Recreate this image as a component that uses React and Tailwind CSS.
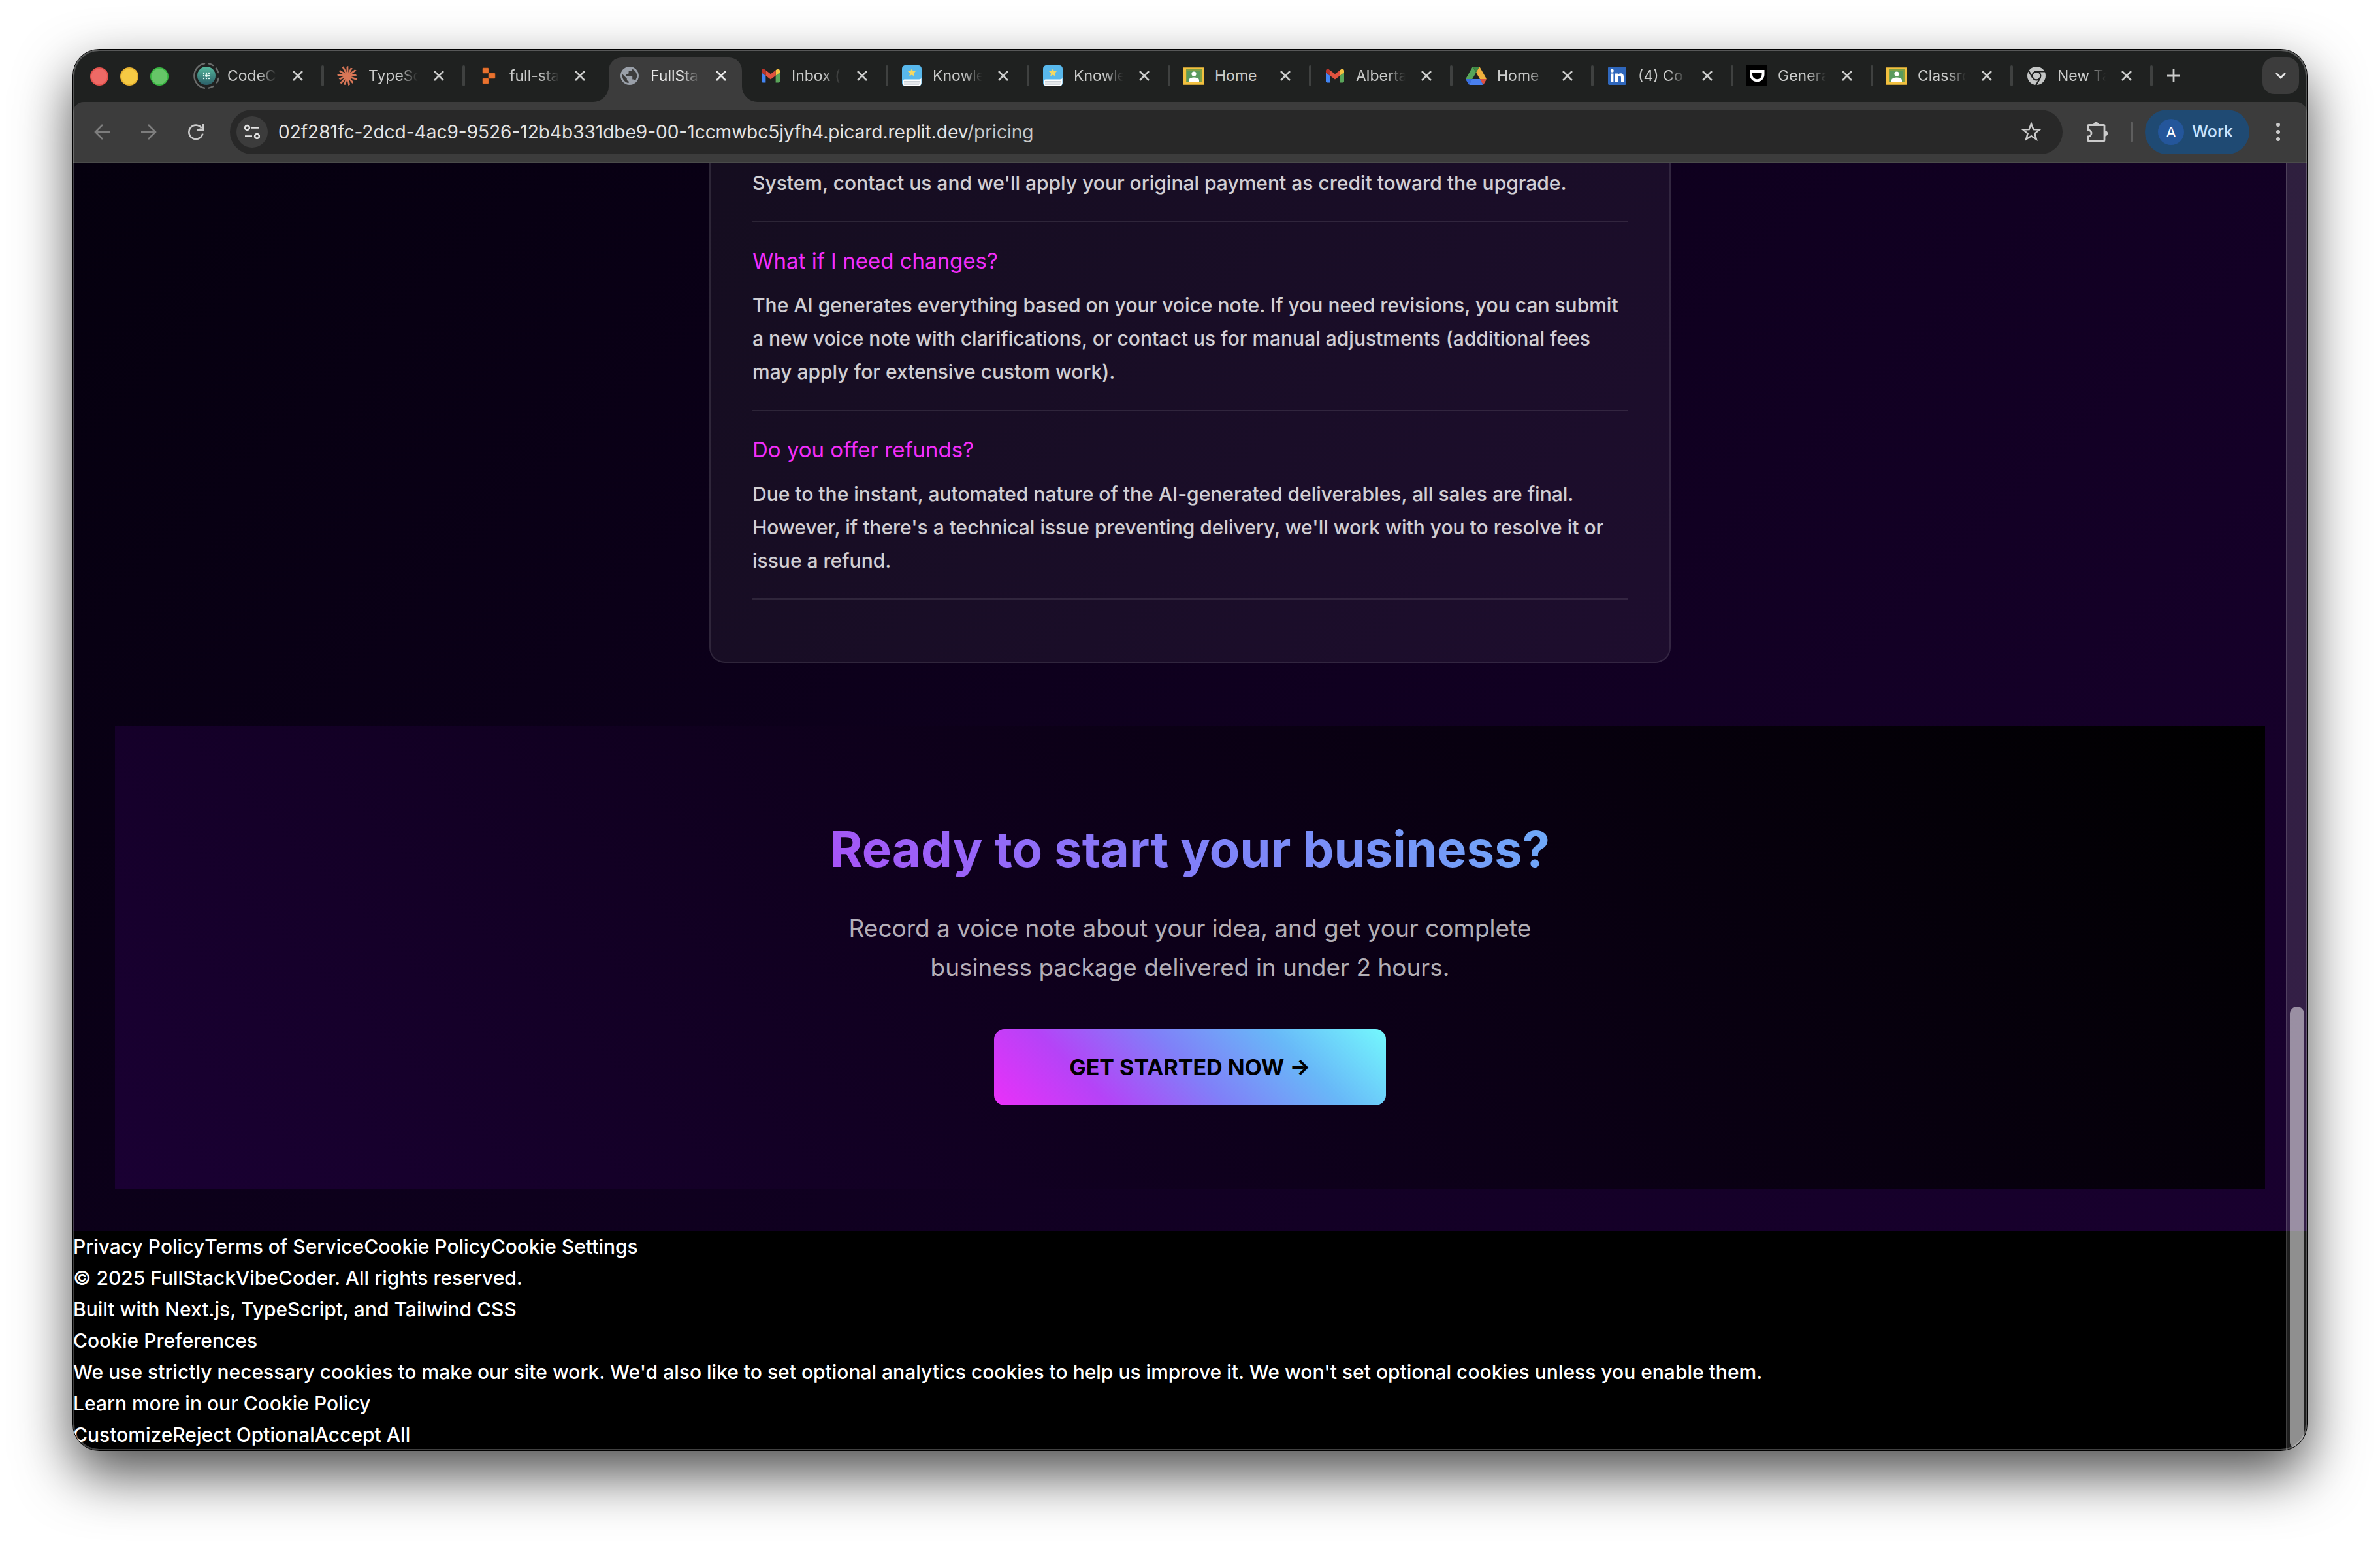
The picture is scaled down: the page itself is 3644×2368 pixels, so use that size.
import React from "react";

/* ---------- favicons ---------- */

function CodeIcon() {
  const dots = [-4, 0, 4];
  return (
    <svg viewBox="-20 -20 40 40" className="size-10 -m-1 shrink-0" aria-hidden="true">
      <defs>
        <linearGradient id="teal" x1="0" y1="0" x2="0" y2="1">
          <stop offset="0" stopColor="#55b79c" />
          <stop offset="1" stopColor="#2b5f68" />
        </linearGradient>
      </defs>
      <g fill="none" stroke="#6b6d6c" strokeWidth="2.4" strokeLinecap="round">
        <path d="M-3 -18.700A19 19 0 0 0 -3 18.700" />
        <path d="M3.500 -18.600A19 19 0 0 1 10 -16M15 -11.500A19 19 0 0 1 18.200 -5M18.600 4A19 19 0 0 1 16 10.500M10.500 16A19 19 0 0 1 3.500 18.600" />
      </g>
      <circle r="14" fill="url(#teal)" />
      {dots.map((y) => dots.map((x) => <circle key={x + "," + y} cx={x} cy={y} r={x === 0 && y === 0 ? 2 : 1.2} fill="#e6fbf4" />))}
    </svg>
  );
}

function BurstIcon() {
  const rays = [[0, 15], [28, 14], [55, 16], [84, 14], [112, 16], [143, 14], [170, 15], [198, 15], [222, 16], [248, 14], [275, 16], [303, 15], [333, 16]];
  return (
    <svg viewBox="-16 -16 32 32" className="size-8 shrink-0" aria-hidden="true">
      {rays.map(([a, l]) => (
        <path key={a} d={`M-1.2 0L-1.5 ${-l + 1}L1.3 ${-l}L1.5 0Z`} transform={`rotate(${a})`} fill="#d97757" />
      ))}
      <circle r="4" fill="#d97757" />
    </svg>
  );
}

function BlocksIcon() {
  return (
    <svg viewBox="0 0 32 32" className="size-8 shrink-0" aria-hidden="true">
      <g fill="#e9722f" stroke="#c85a1c" strokeWidth="0.6">
        <rect x="7" y="4" width="9" height="8" rx="1" />
        <rect x="16" y="12" width="10" height="8" rx="1" />
        <rect x="7" y="20" width="9" height="8" rx="1" />
      </g>
    </svg>
  );
}

function GlobeIcon() {
  return (
    <svg viewBox="2 2 20 20" className="size-7 m-0.5 shrink-0" aria-hidden="true">
      <path fill="#9aa0a9" d="M12 2C6.48 2 2 6.48 2 12s4.48 10 10 10 10-4.48 10-10S17.52 2 12 2zm-1 17.93c-3.95-.49-7-3.85-7-7.93 0-.62.08-1.21.21-1.79L9 15v1c0 1.1.9 2 2 2v1.93zm6.9-2.54c-.26-.81-1-1.39-1.9-1.39h-1v-3c0-.55-.45-1-1-1H8v-2h2c.55 0 1-.45 1-1V7h2c1.1 0 2-.9 2-2v-.41c2.93 1.19 5 4.06 5 7.41 0 2.08-.8 3.97-2.1 5.39z" />
    </svg>
  );
}

function MailIcon() {
  return (
    <svg viewBox="52 42 88 66" className="h-6 w-7 m-0.5 shrink-0" aria-hidden="true">
      <path fill="#4285f4" d="M58 108h14V74L52 59v43c0 3.320 2.690 6 6 6" />
      <path fill="#5aa65a" d="M120 108h14c3.320 0 6-2.690 6-6V59l-20 15" />
      <path fill="#f5c242" d="M120 48v26l20-15v-8c0-7.420-8.470-11.650-14.400-7.200" />
      <path fill="#e0523f" d="M72 74V48l24 18 24-18v26L96 92" />
      <path fill="#b8342b" d="M52 51v8l20 15V48l-5.600-4.200c-5.940-4.450-14.400-.22-14.400 7.200" />
    </svg>
  );
}

function BookIcon() {
  return (
    <svg viewBox="0 0 32 32" className="size-8 shrink-0" aria-hidden="true">
      <rect x="1" y="0" width="30" height="32" rx="5" fill="#58b8ec" />
      <path d="M5 21.500H27Q30.500 21.500 30.500 18V27Q30.500 31.300 26 31.300H6Q2 31.300 2 27.500V25Q2 21.500 5 21.500Z" fill="#fff" />
      <path d="M4 24.500H28M4 27H28M4 29.300H27" stroke="#c5ccd2" strokeWidth="0.900" />
      <path d="M16 5l1.800 3.800 4.200.5-3.100 2.900.8 4.200L16 14.400l-3.700 2 .8-4.200L10 9.300l4.200-.5z" fill="#f5d862" />
    </svg>
  );
}

function ClassroomIcon() {
  return (
    <svg viewBox="0 0 32 28" className="h-7 w-8 shrink-0" aria-hidden="true">
      <rect width="32" height="28" rx="1" fill="#f2c03f" />
      <path d="M0 1Q0 0 1 0H31Q32 0 32 1V2H0ZM0 26H32V27Q32 28 31 28H1Q0 28 0 27Z" fill="#c09a35" />
      <rect x="4" y="4" width="24" height="20" fill="#7fa045" />
      <rect x="6" y="6" width="20" height="18" fill="#5a9a5e" />
      <circle cx="16" cy="11" r="3.600" fill="#fff" />
      <path d="M8 23V20Q10 16.500 16 16.500T24 20V23Z" fill="#fff" />
    </svg>
  );
}

function DriveIcon() {
  return (
    <svg viewBox="0 0 87 78" className="h-7 w-8 shrink-0" aria-hidden="true">
      <path d="M6.600 66.850l3.850 6.650c.8 1.400 1.950 2.500 3.300 3.300l13.750-23.800H0c0 1.550.4 3.100 1.200 4.500z" fill="#3a6fe0" />
      <path d="M43.650 25L29.900 1.200c-1.350.8-2.500 1.900-3.300 3.300L1.200 48.500C.4 49.900 0 51.450 0 53h27.500z" fill="#57a55a" />
      <path d="M73.550 76.800c1.350-.8 2.500-1.900 3.300-3.300l1.600-2.750L86.100 57.500c.8-1.400 1.200-2.950 1.200-4.500H59.800l5.850 11.500z" fill="#dd5144" />
      <path d="M43.650 25L57.400 1.200C56.050.4 54.500 0 52.900 0H34.400c-1.600 0-3.150.45-4.500 1.200z" fill="#3f8a45" />
      <path d="M59.800 53H27.500L13.750 76.800c1.350.8 2.900 1.200 4.500 1.200h50.800c1.600 0 3.150-.45 4.500-1.200z" fill="#4a80ee" />
      <path d="M73.400 26.500L60.700 4.500c-.8-1.400-1.950-2.500-3.300-3.300L43.650 25 59.800 53h27.450c0-1.550-.4-3.100-1.200-4.500z" fill="#f0b03c" />
    </svg>
  );
}

function LinkedInIcon() {
  return (
    <svg viewBox="0 0 28 28" className="size-7 m-0.5 shrink-0" aria-hidden="true">
      <rect width="28" height="28" rx="2" fill="#2f67bc" />
      <circle cx="6.300" cy="6.300" r="2.500" fill="#fff" />
      <path fill="#fff" d="M4.200 10.600h4.200V24H4.200zM11 10.600h4v1.900c.6-1.100 2-2.200 4.100-2.200 4.200 0 5 2.700 5 6.300V24H20v-6.500c0-1.600 0-3.600-2.200-3.600s-2.500 1.700-2.500 3.500V24H11z" />
    </svg>
  );
}

function ShieldIcon() {
  return (
    <svg viewBox="0 0 32 32" className="size-8 shrink-0" aria-hidden="true">
      <rect width="32" height="32" fill="#000" />
      <path d="M7 9H25.500V14A9.200 9.200 0 0 1 7 14Z" fill="none" stroke="#fff" strokeWidth="4" />
    </svg>
  );
}

function ChromeIcon() {
  return (
    <svg viewBox="-14 -14 28 28" className="size-7 m-0.5 shrink-0" aria-hidden="true">
      <circle r="14" fill="#c4c6c5" />
      <circle r="6.400" fill="none" stroke="#1f2120" strokeWidth="2.200" />
      {[0, 120, 240].map((a) => (
        <path key={a} d="M0 -6.600H13.500" transform={`rotate(${a})`} stroke="#1f2120" strokeWidth="2.200" />
      ))}
    </svg>
  );
}

/* ---------- browser icons ---------- */

function CloseIcon() {
  return (
    <svg viewBox="0 0 16 16" className="size-4" aria-hidden="true">
      <path d="M1 1L15 15M15 1L1 15" stroke="currentColor" strokeWidth="2.600" />
    </svg>
  );
}

function BackIcon() {
  return (
    <svg viewBox="0 0 24 24" className="size-6" aria-hidden="true">
      <path d="M24 12H2M13 1L2 12L13 23" fill="none" stroke="currentColor" strokeWidth="2.500" />
    </svg>
  );
}

function ForwardIcon() {
  return (
    <svg viewBox="0 0 24 24" className="size-6" aria-hidden="true">
      <path d="M0 12H22M11 1L22 12L11 23" fill="none" stroke="currentColor" strokeWidth="2.500" />
    </svg>
  );
}

function ReloadIcon() {
  return (
    <svg viewBox="0 0 24 24" className="size-6" aria-hidden="true">
      <path d="M22.300 14.500A10.600 10.600 0 1 1 20.500 6" fill="none" stroke="currentColor" strokeWidth="2.600" />
      <path d="M23 0V9H14" fill="none" stroke="currentColor" strokeWidth="2.600" />
      <path d="M23.500 0.500V9.500H14.500Z" fill="currentColor" opacity="0.500" />
    </svg>
  );
}

function TuneIcon() {
  return (
    <svg viewBox="0 0 24 24" className="size-6" aria-hidden="true">
      <g fill="none" stroke="currentColor" strokeWidth="2.600">
        <circle cx="4.500" cy="5.500" r="3.400" />
        <path d="M11 5.500H23M1 18.500H12" />
        <circle cx="19.500" cy="18.500" r="3.400" />
      </g>
    </svg>
  );
}

function StarIcon() {
  return (
    <svg viewBox="0 0 32 32" className="size-8" aria-hidden="true">
      <path d="M16 3.500L19.300 12L28.500 12.600L21.400 18.400L23.800 27.300L16 22.300L8.200 27.300L10.600 18.400L3.500 12.600L12.700 12Z" fill="none" stroke="currentColor" strokeWidth="2.500" />
    </svg>
  );
}

function PuzzleIcon() {
  return (
    <svg viewBox="0 0 32 32" className="size-8" aria-hidden="true">
      <path d="M4 5.500H26Q27 5.500 27 6.500V29Q27 30 26 30H3Q2 30 2 29V23A5 5 0 0 0 2 13V6.500Q2 5.500 3 5.500Z" fill="none" stroke="currentColor" strokeWidth="2.800" strokeLinejoin="round" />
      <path d="M10 5A4.200 4.200 0 0 1 18.400 5ZM28 14A4.200 4.200 0 0 1 28 22.400Z" fill="currentColor" />
    </svg>
  );
}

const TABS = [
  { title: "CodeC", icon: CodeIcon },
  { title: "TypeSc", icon: BurstIcon },
  { title: "full-sta", icon: BlocksIcon },
  { title: "FullSta", icon: GlobeIcon, active: true },
  { title: "Inbox (", icon: MailIcon },
  { title: "Knowle", icon: BookIcon },
  { title: "Knowle", icon: BookIcon },
  { title: "Home", icon: ClassroomIcon, whole: true },
  { title: "Alberta", icon: MailIcon },
  { title: "Home", icon: DriveIcon },
  { title: "(4) Co", icon: LinkedInIcon, narrow: true },
  { title: "Genera", icon: ShieldIcon, narrow: true },
  { title: "Classro", icon: ClassroomIcon, narrow: true },
  { title: "New Ta", icon: ChromeIcon, narrow: true },
];

function Tab({ tab, separator }) {
  const Icon = tab.icon;
  return (
    <div className={"relative flex min-w-0 " + (tab.narrow ? "flex-[214]" : "flex-[216]")}>
      {tab.active && (
        <>
          <div className="absolute inset-x-1.5 inset-y-0 rounded-t-[20px] bg-[#3c3c3c]" />
          <svg viewBox="0 0 24 24" className="absolute right-[calc(100%-6px)] bottom-0 size-6" aria-hidden="true">
            <path d="M24 0V24H0A24 24 0 0 0 24 0Z" fill="#3c3c3c" />
          </svg>
          <svg viewBox="0 0 24 24" className="absolute left-[calc(100%-6px)] bottom-0 size-6" aria-hidden="true">
            <path d="M0 0V24H24A24 24 0 0 1 0 0Z" fill="#3c3c3c" />
          </svg>
        </>
      )}
      <div className="relative flex h-14 min-w-0 flex-1 items-center pl-[22px]">
        <Icon />
        <span
          className={
            "ml-4 min-w-0 flex-1 whitespace-nowrap text-[23px] leading-8 " +
            (tab.whole ? "" : "[mask-image:linear-gradient(to_right,#000_62%,transparent_100%)] ") +
            (tab.active ? "text-[#e8e8e8]" : "text-[#cbcccb]")
          }
        >
          {tab.title}
        </span>
        <button type="button" aria-label={"Close " + tab.title} className={"ml-6 mr-[30px] " + (tab.active ? "text-[#e8e8e8]" : "text-[#cbcccb]")}>
          <CloseIcon />
        </button>
        {separator && <div className="-ml-0.5 -mr-0.5 h-8 w-1 shrink-0 rounded-sm bg-[#3f4140]" />}
      </div>
    </div>
  );
}

function TabStrip() {
  return (
    <div className="flex h-20 items-end bg-[#1f2120] pl-[26px] pr-3">
      <div className="flex h-[68px] items-start gap-[18px] pt-[15px]">
        <button type="button" aria-label="Close window" className="size-7 rounded-full border-2 border-[#e0443e]/60 bg-[#ee6a66]" />
        <button type="button" aria-label="Minimize window" className="size-7 rounded-full border-2 border-[#dea123]/60 bg-[#f5ca44]" />
        <button type="button" aria-label="Zoom window" className="size-7 rounded-full border-2 border-[#1aab29]/60 bg-[#66c568]" />
      </div>
      <div className="ml-5 flex h-[68px] max-w-[3016px] flex-[100]">
        {TABS.map((tab, i) => (
          <Tab key={i} tab={tab} separator={i !== 2 && i !== 3} />
        ))}
      </div>
      <div className="ml-6 flex h-[68px] flex-1 items-start justify-between">
        <button type="button" aria-label="New tab" className="flex h-14 w-5 items-center text-[#cbcccb]">
          <svg viewBox="0 0 20 20" className="size-5" aria-hidden="true">
            <path d="M10 0V20M0 10H20" stroke="currentColor" strokeWidth="2.800" />
          </svg>
        </button>
        <button type="button" aria-label="Search tabs" className="flex size-14 items-center justify-center rounded-[18px] bg-[#3c3c3c] text-[#e8e8e8]">
          <svg viewBox="0 0 16 10" className="h-2.5 w-4" aria-hidden="true">
            <path d="M1 1L8 8L15 1" fill="none" stroke="currentColor" strokeWidth="2.800" />
          </svg>
        </button>
      </div>
    </div>
  );
}

function Toolbar() {
  return (
    <div className="bg-[#1f2120]">
      <div className="flex h-[94px] items-center rounded-t-2xl border-b-2 border-[#4a4b4a] bg-[#3c3c3c] pl-8">
        <div className="flex items-center gap-12">
          <button type="button" aria-label="Back" className="text-[#7d7d7d]"><BackIcon /></button>
          <button type="button" aria-label="Forward" className="text-[#7d7d7d]"><ForwardIcon /></button>
          <button type="button" aria-label="Reload" className="text-[#cbcbcb]"><ReloadIcon /></button>
        </div>
        <div className="ml-10 flex h-[68px] flex-1 items-center rounded-full bg-[#282828] pl-2.5 pr-8">
          <button type="button" aria-label="Site information" className="flex size-12 items-center justify-center rounded-full bg-[#3c3c3c] text-[#e3e3e3]">
            <TuneIcon />
          </button>
          <div className="ml-4 flex-1 whitespace-nowrap text-[28px] leading-9 text-[#e3e3e3]">
            02f281fc-2dcd-4ac9-9526-12b4b331dbe9-00-1ccmwbc5jyfh4.picard.replit.dev<span className="text-[#c7c7c7]">/pricing</span>
          </div>
          <button type="button" aria-label="Bookmark" className="text-[#cbcbcb]"><StarIcon /></button>
        </div>
        <button type="button" aria-label="Extensions" className="ml-[37px] text-[#cbcbcb]"><PuzzleIcon /></button>
        <div className="ml-[35px] h-8 w-1 rounded-sm bg-[#5e5e5e]" />
        <button type="button" className="ml-[18px] flex h-[68px] w-40 items-center rounded-full bg-[#1f4a73] pl-5">
          <span className="flex size-10 items-center justify-center rounded-full bg-[#24569b] text-[22px] text-white">A</span>
          <span className="ml-3 text-[25px] font-medium text-[#c8e4ff]">Work</span>
        </button>
        <button type="button" aria-label="Menu" className="ml-10 mr-10 text-[#cbcbcb]">
          <svg viewBox="0 0 8 28" className="h-7 w-2" aria-hidden="true">
            <g fill="currentColor"><circle cx="4" cy="3" r="3" /><circle cx="4" cy="14" r="3" /><circle cx="4" cy="25" r="3" /></g>
          </svg>
        </button>
      </div>
    </div>
  );
}

const FAQ = [
  {
    q: "What if I need changes?",
    lines: [
      "The AI generates everything based on your voice note. If you need revisions, you can submit",
      "a new voice note with clarifications, or contact us for manual adjustments (additional fees",
      "may apply for extensive custom work).",
    ],
  },
  {
    q: "Do you offer refunds?",
    lines: [
      "Due to the instant, automated nature of the AI-generated deliverables, all sales are final.",
      "However, if there's a technical issue preventing delivery, we'll work with you to resolve it or",
      "issue a refund.",
    ],
  },
];

function FaqCard() {
  return (
    <section className="mx-auto max-w-[1472px] rounded-b-3xl border-2 border-t-0 border-white/10 bg-white/5 px-16 pt-[5px] pb-[95px] text-[30px] leading-[51px] whitespace-nowrap">
      <div className="border-b-2 border-white/10 pb-8 font-medium text-white/80">
        <p>System, contact us and we'll apply your original payment as credit toward the upgrade.</p>
      </div>
      {FAQ.map((item) => (
        <div key={item.q} className="border-b-2 border-white/10 py-8">
          <h3 className="mb-4 text-[33px] leading-[54px] text-[#f32dfb]">{item.q}</h3>
          <p className="font-medium text-white/80">
            {item.lines.map((line) => (
              <span key={line} className="block">{line} </span>
            ))}
          </p>
        </div>
      ))}
    </section>
  );
}

function CallToAction() {
  return (
    <section className="mt-24 bg-[linear-gradient(45deg,#1a0033,#000000)] p-32 text-center">
      <h2 className="mb-8 bg-[linear-gradient(45deg,#ea30f9,#b543f7_25%,#8080f8_50%,#68b8f8_75%,#74f9fd)] bg-clip-text text-[76px] leading-[120px] font-bold text-transparent">
        Ready to start your business?
      </h2>
      <p className="mb-16 text-[37px] leading-[60px] whitespace-nowrap text-white/70">
        Record a voice note about your idea, and get your complete
        <br />
        business package delivered in under 2 hours.
      </p>
      <a href="#start" className="mx-auto flex w-[600px] items-center justify-center rounded-2xl bg-[linear-gradient(45deg,#ea30f9,#b543f7_25%,#8080f8_50%,#68b8f8_75%,#74f9fd)] py-8 text-[34px] leading-[53px] font-bold text-black">
        GET STARTED NOW →
      </a>
    </section>
  );
}

function Footer() {
  return (
    <footer className="bg-black text-[30px] leading-[48px] font-medium whitespace-nowrap text-white">
      <nav className="flex">
        <a href="#privacy">Privacy Policy</a>
        <a href="#terms">Terms of Service</a>
        <a href="#cookies">Cookie Policy</a>
        <button type="button">Cookie Settings</button>
      </nav>
      <p>© 2025 FullStackVibeCoder. All rights reserved.</p>
      <p>Built with Next.js, TypeScript, and Tailwind CSS</p>
      <h2>Cookie Preferences</h2>
      <p>We use strictly necessary cookies to make our site work. We'd also like to set optional analytics cookies to help us improve it. We won't set optional cookies unless you enable them.</p>
      <p>Learn more in our <a href="#cookies">Cookie Policy</a></p>
      <div className="flex">
        <button type="button">Customize</button>
        <button type="button">Reject Optional</button>
        <button type="button">Accept All</button>
      </div>
    </footer>
  );
}

export default function App() {
  return (
    <div className="min-h-screen bg-white px-28 pt-[76px] pb-[148px] font-['Inter','Liberation_Sans',sans-serif]">
      <div className="relative overflow-hidden rounded-[40px] shadow-[0_0_0_1px_#000,0_36px_86px_rgba(0,0,0,0.7)]">
        <TabStrip />
        <Toolbar />
        <div className="relative">
          <main className="bg-[linear-gradient(135deg,#05000e,#0e001d_45%,#19002f)] px-16 pb-16">
            <FaqCard />
            <CallToAction />
          </main>
          <Footer />
          <div className="absolute inset-y-0 right-0 flex w-8 flex-col justify-end border-l-2 border-white/15 bg-white/12 pb-0.5 pl-1 pr-1">
            <div className="h-[677px] rounded-full bg-white/50" />
          </div>
        </div>
        <div className="pointer-events-none absolute inset-0 rounded-[40px] border-2 border-white/25" />
      </div>
    </div>
  );
}
